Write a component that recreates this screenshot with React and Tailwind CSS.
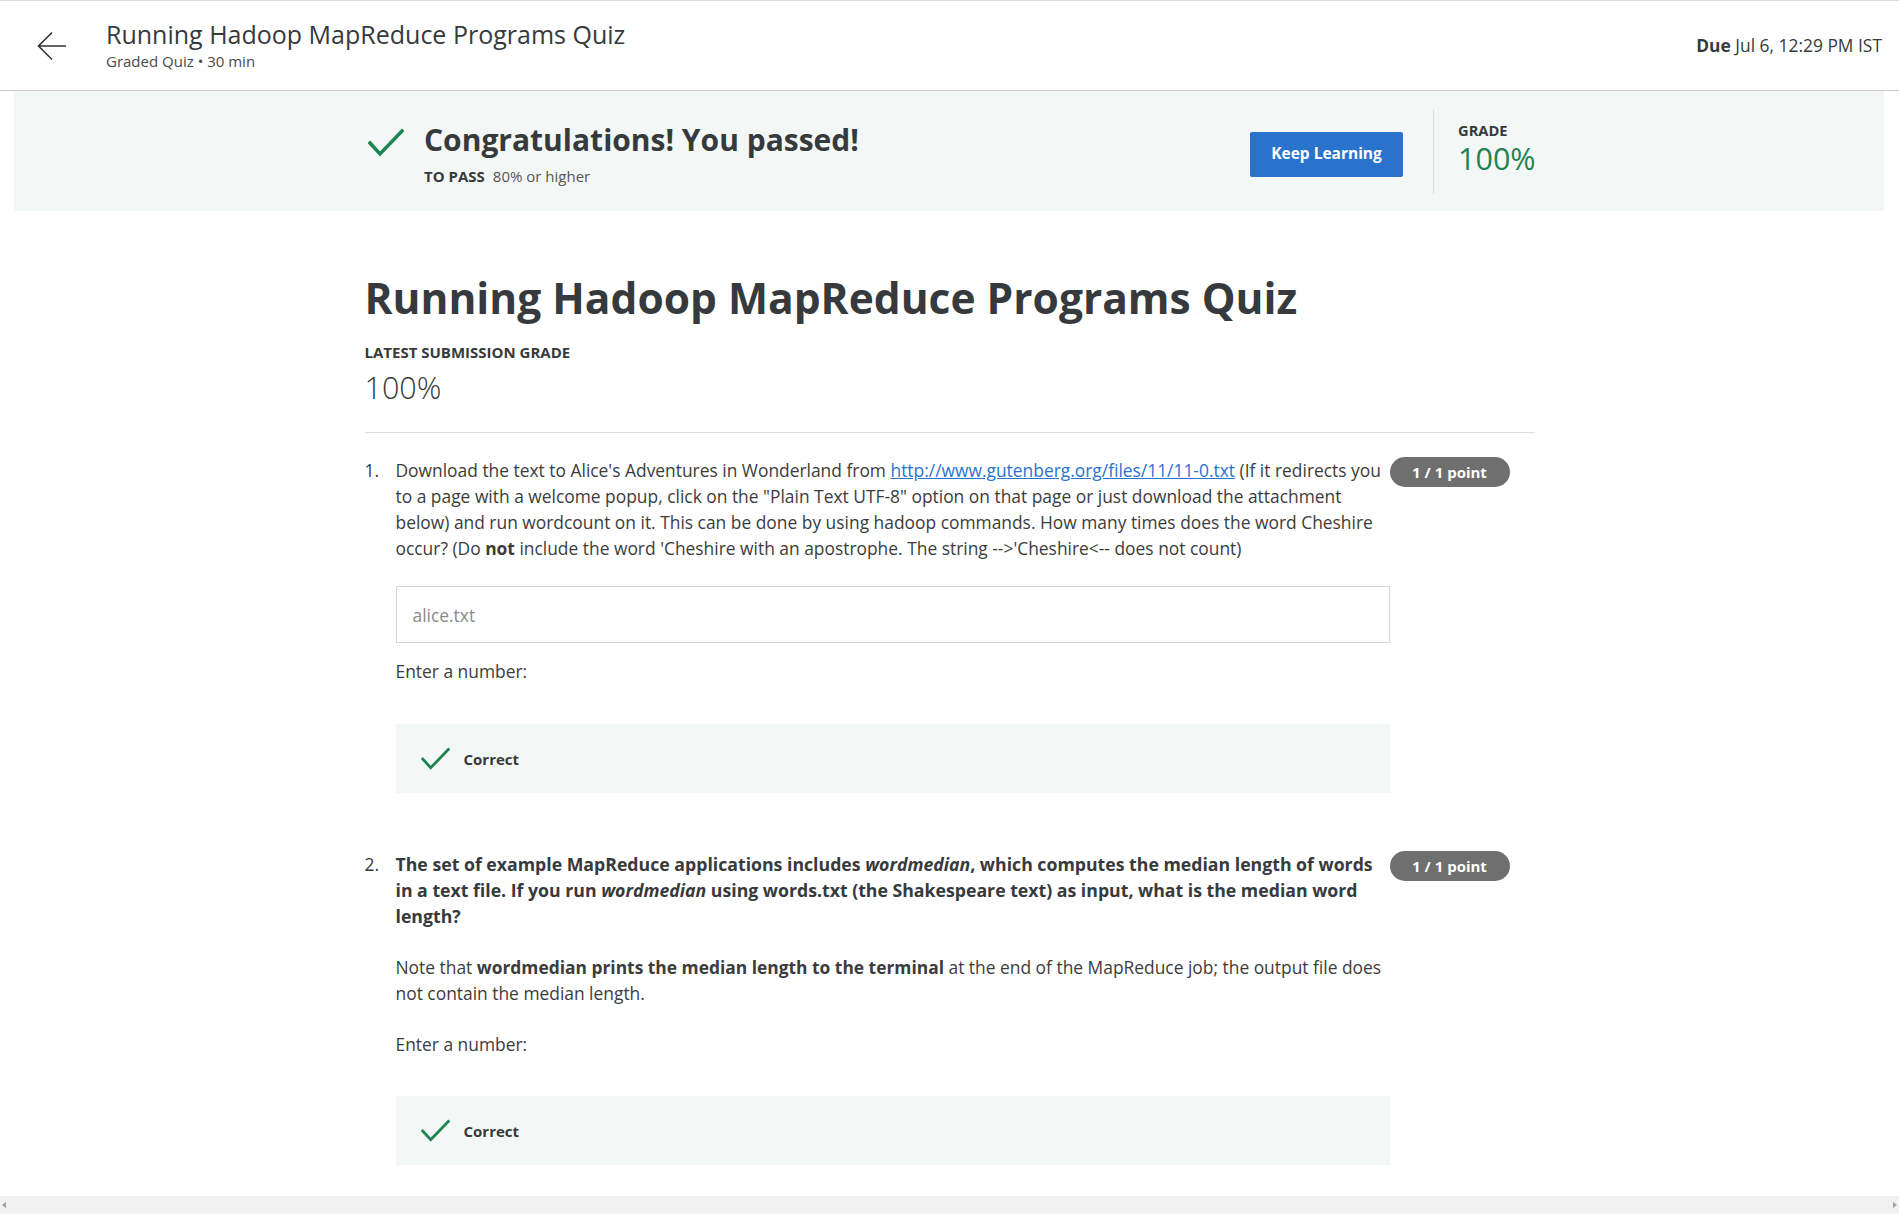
import React from 'react'

function Check({ className }) {
  return (
    <svg viewBox="0 0 36 30" className={className} fill="none">
      <polyline points="2,15 12,26 34,3" stroke="#1f8354" strokeWidth="3.5" strokeLinecap="square" />
    </svg>
  )
}

function BackArrow() {
  return (
    <svg viewBox="0 0 30 30" className="w-[30px] h-[30px]" fill="none">
      <path d="M29 15H1.5M15 1.5 1.5 15 15 28.5" stroke="#333" strokeWidth="1.6" />
    </svg>
  )
}

function Badge() {
  return (
    <div className="shrink-0 w-[120px] h-[30px] rounded-full bg-[#6f6f6f] text-white text-[15px] font-bold flex items-center justify-center">
      1 / 1 point
    </div>
  )
}

function CorrectBox() {
  return (
    <div className="h-[69px] bg-[#f3f8f6] flex items-center pl-[25px] gap-[14px]">
      <Check className="w-[29px] h-[24px]" />
      <span className="text-[15px] font-bold text-[#373a3c]">Correct</span>
    </div>
  )
}

export default function App() {
  return (
    <div className="w-full h-[1214px] flex flex-col overflow-hidden bg-white text-[#373a3c]" style={{ fontFamily: '"Open Sans", "Noto Sans", sans-serif' }}>
      {/* header */}
      <header className="h-[91px] shrink-0 border-t border-b border-t-[#dcdcdc] border-b-[#c8c8c8] flex items-center pr-[17px]">
        <div className="w-[106px] flex justify-start pl-[37px]">
          <BackArrow />
        </div>
        <div className="flex flex-col -mt-[2px]">
          <h2 className="text-[25px] leading-[30px] text-[#373a3c]">Running Hadoop MapReduce Programs Quiz</h2>
          <span className="text-[15px] leading-[20px] mt-[2px] text-[#4a4a4a]">Graded Quiz • 30 min</span>
        </div>
        <div className="ml-auto text-[17.4px] text-[#373a3c]">
          <span className="font-bold">Due</span> Jul 6, 12:29 PM IST
        </div>
      </header>

      <div className="flex-1 overflow-hidden">
        {/* banner */}
        <div className="ml-[14px] mr-[15px] h-[120px] bg-[#f3f8f6]">
          <div className="w-[1170px] mx-auto h-full flex items-center">
            <Check className="ml-[4px] -mt-[16px] w-[36px] h-[30px]" />
            <div className="ml-[20px] mt-[4px] flex flex-col">
              <h1 className="text-[30px] leading-[40px] font-bold text-[#373a3c]">Congratulations! You passed!</h1>
              <div className="text-[15px] leading-[20px] mt-[6px]">
                <span className="font-bold">TO PASS</span>
                <span className="ml-[8px] text-[#555]">80% or higher</span>
              </div>
            </div>
            <button className="ml-auto mt-[6px] w-[153px] h-[45px] rounded-[2px] bg-[#2a73cc] text-white text-[15.5px] font-bold">
              Keep Learning
            </button>
            <div className="w-px h-[85px] bg-[#dcdcdc] ml-[30px] mr-[24px]" />
            <div className="flex flex-col w-[76px] -mt-[4px]">
              <span className="text-[14.7px] leading-[18px] font-bold">GRADE</span>
              <span className="text-[30.5px] leading-[38px] text-[#1f8354]">100%</span>
            </div>
          </div>
        </div>

        {/* main */}
        <main className="w-[1170px] mx-auto pt-[60px]">
          <h1 className="text-[42.5px] leading-[54px] font-bold text-[#373a3c]">Running Hadoop MapReduce Programs Quiz</h1>
          <div className="mt-[17px] text-[15px] leading-[20px] font-bold">LATEST SUBMISSION GRADE</div>
          <div className="mt-[6px] text-[30.5px] leading-[38px] font-light">100%</div>
          <hr className="mt-[26px] border-[#dedede]" />

          {/* question 1 */}
          <div className="pt-[24px] flex">
            <div className="w-[31px] text-[17.4px] leading-[26px]">1.</div>
            <div className="w-[994px] text-[17.4px] leading-[26px] text-[#3c3c3c]">
              <p>
                Download the text to Alice's Adventures in Wonderland from{' '}
                <a className="text-[#2a73cc] underline" href="#">http://www.gutenberg.org/files/11/11-0.txt</a>{' '}
                (If it redirects you to a page with a welcome popup, click on the "Plain Text UTF-8" option on that page or just download the attachment below) and run wordcount on it. This can be done by using hadoop commands. How many times does the word Cheshire occur? (Do <b>not</b> include the word 'Cheshire with an apostrophe. The string --&gt;'Cheshire&lt;-- does not count)
              </p>
              <div className="mt-[25px] h-[57px] border border-[#d6d6d6] flex items-center pl-[16px] text-[17.4px] text-[#8a8a8a]">
                alice.txt
              </div>
              <div className="mt-[15px]">Enter a number:</div>
              <div className="mt-[40px]">
                <CorrectBox />
              </div>
            </div>
            <Badge />
          </div>

          {/* question 2 */}
          <div className="mt-[58px] flex">
            <div className="w-[31px] text-[17.4px] leading-[26px]">2.</div>
            <div className="w-[994px] text-[17.4px] leading-[26px] text-[#3c3c3c]">
              <p className="font-bold text-[17.7px] text-[#373a3c]">
                The set of example MapReduce applications includes <i>wordmedian</i>, which computes the median length of words in a text file. If you run <i>wordmedian</i> using words.txt (the Shakespeare text) as input, what is the median word length?
              </p>
              <p className="mt-[25px]">
                Note that <b>wordmedian prints the median length to the terminal</b> at the end of the MapReduce job; the output file does not contain the median length.
              </p>
              <div className="mt-[25px]">Enter a number:</div>
              <div className="mt-[39px]">
                <CorrectBox />
              </div>
            </div>
            <Badge />
          </div>
        </main>
      </div>

      {/* horizontal scrollbar */}
      <div className="h-[18px] shrink-0 bg-[#f1f1f1] flex items-center justify-between px-[2px]">
        <svg viewBox="0 0 6 10" className="w-[4px] h-[8px]"><path d="M6 0 0 5 6 10Z" fill="#a3a3a3" /></svg>
        <svg viewBox="0 0 6 10" className="w-[4px] h-[8px]"><path d="M0 0 6 5 0 10Z" fill="#a3a3a3" /></svg>
      </div>
    </div>
  )
}
